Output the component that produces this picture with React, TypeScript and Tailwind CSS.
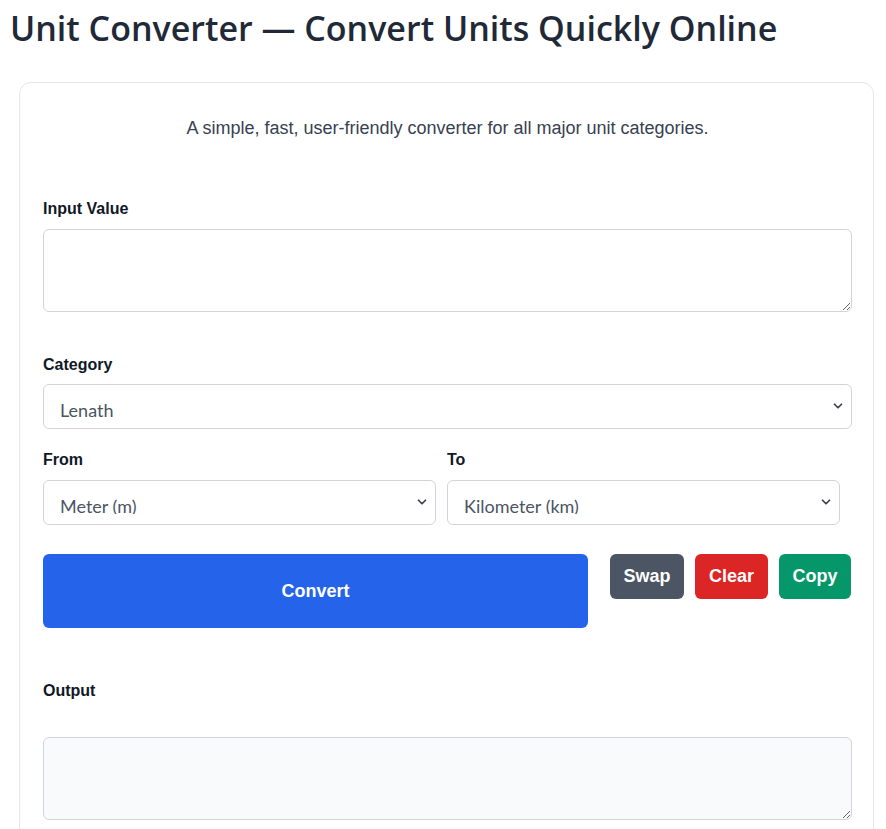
import { ChevronDown } from "lucide-react";

const FakeSelect = ({ value, className = "" }: { value: string; className?: string }) => (
  <div
    className={`relative h-[45px] rounded-md border border-[#d1d5db] bg-white px-4 ${className}`}
  >
    <div className="h-[33px] overflow-hidden pt-[12px] font-['Lato'] text-[18px] leading-[26px] text-[#4b5563]">
      {value}
    </div>
    <ChevronDown
      size={14}
      strokeWidth={3}
      className="absolute right-[6px] top-[14px] text-[#374151]"
    />
  </div>
);

export default function App() {
  return (
    <div className="min-h-screen bg-white px-[10px] pt-[6px] font-['Liberation_Sans',Arial,sans-serif] text-[#111827]">
      <h1 className="font-['Open_Sans',sans-serif] text-[34px] font-semibold leading-[44px] text-[#1f2937]">
        Unit Converter — Convert Units Quickly Online
      </h1>

      <div className="ml-[9px] mt-[32px] w-[855px] rounded-xl border border-[#e5e7eb] bg-white pb-10 pl-[23px] pr-[21px] pt-[34px]">
        <p className="text-center text-[18px] leading-[22px] text-[#374151]">
          A simple, fast, user-friendly converter for all major unit categories.
        </p>

        <label className="mt-[61px] block text-[16px] font-bold leading-[18px]">Input Value</label>
        <textarea className="mt-[11px] block h-[83px] w-full rounded-md border border-[#d1d5db] bg-white" />

        <label className="mt-[44px] block text-[16px] font-bold leading-[18px]">Category</label>
        <FakeSelect value="Lenath" className="mt-[10px]" />

        <div className="mt-[22px] flex gap-[11px]">
          <div className="w-[393px]">
            <label className="block text-[16px] font-bold leading-[18px]">From</label>
            <FakeSelect value="Meter (m)" className="mt-[11px]" />
          </div>
          <div className="w-[393px]">
            <label className="block text-[16px] font-bold leading-[18px]">To</label>
            <FakeSelect value="Kilometer (km)" className="mt-[11px]" />
          </div>
        </div>

        <div className="mt-[29px] flex items-start">
          <button className="h-[74px] w-[545px] rounded-md bg-[#2563eb] text-[18px] font-bold text-white">
            Convert
          </button>
          <button className="ml-[22px] h-[45px] w-[74px] rounded-md bg-[#4b5563] text-[18px] font-bold text-white">
            Swap
          </button>
          <button className="ml-[11px] h-[45px] w-[73px] rounded-md bg-[#dc2626] text-[18px] font-bold text-white">
            Clear
          </button>
          <button className="ml-[11px] h-[45px] w-[72px] rounded-md bg-[#059669] text-[18px] font-bold text-white">
            Copy
          </button>
        </div>

        <label className="mt-[54px] block text-[16px] font-bold leading-[18px]">Output</label>
        <textarea
          readOnly
          className="mt-[37px] block h-[83px] w-full rounded-md border border-[#d1d5db] bg-[#f9fafb]"
        />
      </div>
    </div>
  );
}
